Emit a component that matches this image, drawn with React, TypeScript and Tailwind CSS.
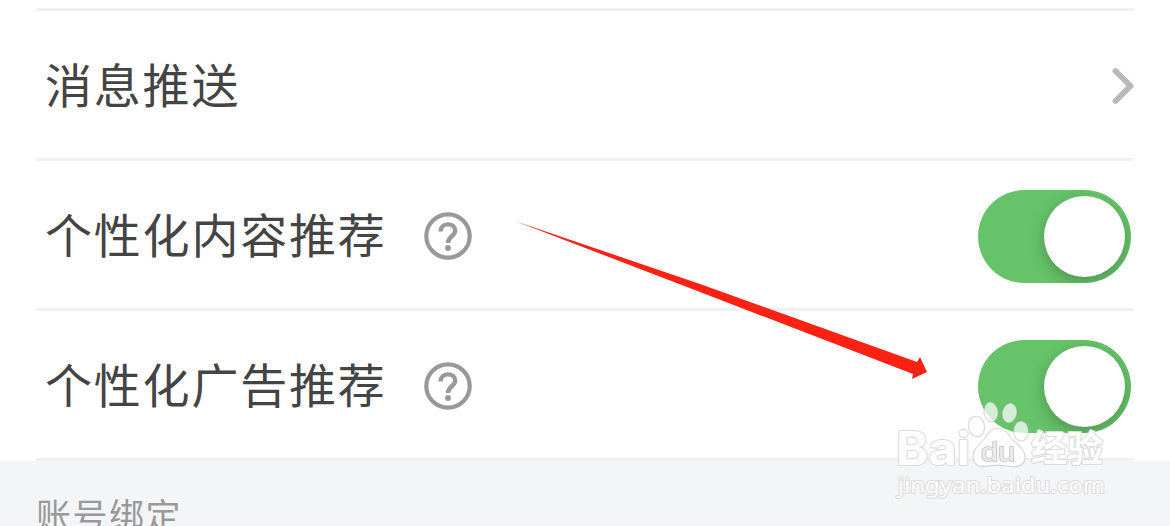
import { ReactElement, ReactNode } from 'react';

type RowProps = {
  title: string;
  hasHelp?: boolean;
  children: ReactNode;
};

const HelpIcon = (): ReactElement => (
  <svg width="48" height="48" viewBox="0 0 48 48" fill="none">
    <circle cx="24" cy="24" r="21.7" stroke="#999999" strokeWidth="4.2" />
    <path
      d="M16.6 19.6C16.6 15.2 19.6 12.4 23.9 12.4C28.2 12.4 31.2 15.1 31.2 18.7C31.2 24 24 24.2 24 31"
      stroke="#999999"
      strokeWidth="4.4"
    />
    <circle cx="24" cy="36" r="2.9" fill="#999999" />
  </svg>
);

const ChevronIcon = (): ReactElement => (
  <svg width="24" height="38" viewBox="0 0 24 38" fill="none">
    <path
      d="M5.5 4L20.5 19L5.5 34"
      stroke="#b9b9b9"
      strokeWidth="5.8"
      strokeLinecap="round"
      strokeLinejoin="round"
    />
  </svg>
);

const Toggle = (): ReactElement => (
  <button
    type="button"
    role="switch"
    aria-checked="true"
    className="mr-[3px] flex h-[93px] w-[153px] items-center justify-end overflow-hidden rounded-full bg-[#66c369] pr-1.5"
  >
    <span className="size-[81px] rounded-full bg-white shadow-[0_5px_16px_rgba(0,0,0,0.24)]" />
  </button>
);

const SettingsRow = ({ title, hasHelp, children }: RowProps): ReactElement => (
  <div className="flex h-[150px] items-center justify-between border-b-[3px] border-[#f0f0f0] pl-[9px] pt-[3px]">
    <div className="flex items-center">
      <span className="-mt-[6px] text-[47px] leading-[60px] tracking-[1.8px] text-[#444444]">
        {title}
      </span>
      {hasHelp && (
        <span className="ml-[37px]">
          <HelpIcon />
        </span>
      )}
    </div>
    {children}
  </div>
);

const Arrow = (): ReactElement => (
  <svg
    className="pointer-events-none absolute left-[510px] top-[215px]"
    width="425"
    height="170"
    viewBox="510 215 425 170"
  >
    <path
      d="M515 221L700 284L917 362L920 357L927 372L912 379L913 374L700 292Z"
      fill="#fb2214"
    />
  </svg>
);

const Watermark = (): ReactElement => (
  <svg
    className="pointer-events-none absolute left-[890px] top-[395px]"
    width="225"
    height="110"
    viewBox="890 395 225 110"
  >
    <g fill="#ffffff" fillOpacity="0.72" stroke="#a0a0a0" strokeOpacity="0.4" strokeWidth="1.2">
      <ellipse cx="991" cy="412" rx="7" ry="10" transform="rotate(-8 991 412)" />
      <ellipse cx="1009.5" cy="413" rx="7.3" ry="10" transform="rotate(12 1009.5 413)" />
      <ellipse cx="976.5" cy="426.5" rx="8" ry="10.3" transform="rotate(-8 976.5 426.5)" />
      <ellipse cx="1021" cy="431" rx="7.5" ry="10" />
      <path d="M987 435C993 426 1003 426 1009 435C1014 444 1025 447 1025 457C1025 466 1017 468 1008 466C1001 465 995 465 988 466C980 468 973 465 973 457C973 447 982 444 987 435Z" />
    </g>
    <text
      x="981"
      y="461"
      fontFamily="'Liberation Sans', sans-serif"
      fontSize="26"
      textLength="34"
      lengthAdjust="spacingAndGlyphs"
      fill="#ececec"
      stroke="#c4c4c4"
      strokeWidth="1.6"
      paintOrder="stroke"
    >
      du
    </text>
    <g fill="#ffffff" stroke="#dcdcdc" strokeWidth="2.2" paintOrder="stroke" strokeLinejoin="round">
      <text
        x="896"
        y="465"
        fontFamily="Inter, sans-serif"
        fontWeight="700"
        fontSize="46"
        textLength="74"
        lengthAdjust="spacingAndGlyphs"
      >
        Bai
      </text>
      <text
        x="1031"
        y="462"
        fontFamily="'Noto Sans CJK SC', sans-serif"
        fontWeight="700"
        fontSize="36"
        textLength="72"
      >
        经验
      </text>
      <text
        x="898"
        y="493"
        fontFamily="'Noto Sans', sans-serif"
        fontSize="22"
        textLength="207"
        lengthAdjust="spacingAndGlyphs"
      >
        jingyan.baidu.com
      </text>
    </g>
  </svg>
);

const App = (): ReactElement => {
  return (
    <div className="relative flex h-[526px] w-[1170px] flex-col overflow-hidden bg-white font-['Noto_Sans_CJK_SC',sans-serif]">
      <div className="px-9">
        <div className="h-[11px] border-b-[3px] border-[#f0f0f0]" />
        <SettingsRow title="消息推送">
          <ChevronIcon />
        </SettingsRow>
        <SettingsRow title="个性化内容推荐" hasHelp>
          <Toggle />
        </SettingsRow>
        <SettingsRow title="个性化广告推荐" hasHelp>
          <Toggle />
        </SettingsRow>
      </div>
      <div className="h-[65px] bg-[#f4f5f7] px-9 pt-[27px]">
        <span className="block text-[35px] leading-[52px] tracking-[1.5px] text-[#999999]">
          账号绑定
        </span>
      </div>
      <Arrow />
      <Watermark />
    </div>
  );
};

export default App;
